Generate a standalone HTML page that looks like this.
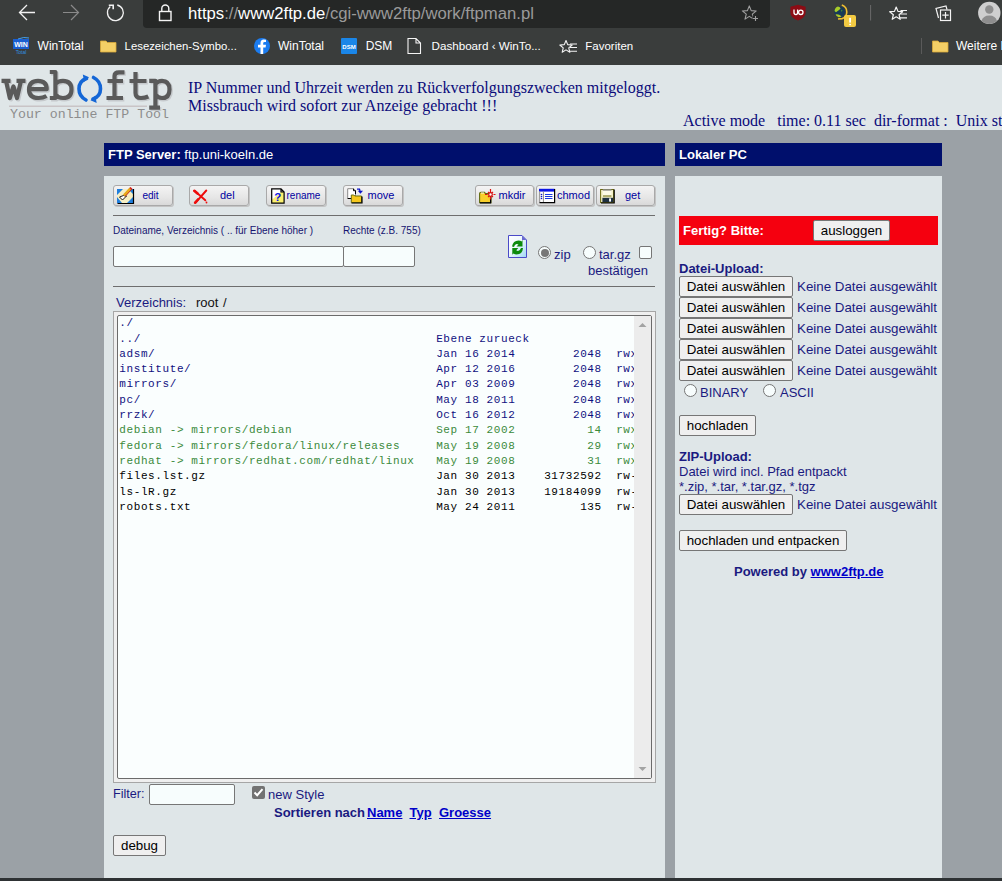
<!DOCTYPE html>
<html><head><meta charset="utf-8">
<style>
*{box-sizing:border-box}
html,body{margin:0;padding:0;width:1002px;height:881px;overflow:hidden;background:#9ba1a6;font-family:"Liberation Sans",sans-serif}
.a{position:absolute}
#chrome{position:absolute;left:0;top:0;width:1002px;height:65px;background:#3a3d3c}
#addr{position:absolute;left:143px;top:-6px;width:627px;height:34px;background:#252726;border-radius:0 0 4px 4px}
.ct{position:absolute;color:#fff;font-size:12px;white-space:nowrap;line-height:14px}
#hdr{position:absolute;left:0;top:65px;width:1002px;height:65px;background:#dfe6e8}
.serif{font-family:"Liberation Serif",serif;color:#0a0a7a;font-size:16px;white-space:nowrap;position:absolute;line-height:18px}
.bar{position:absolute;background:#000f6c;color:#fff;font-size:13px;line-height:15px;white-space:nowrap}
.panel{position:absolute;background:#dfe6e8}
.btn{position:absolute;height:21px;border:1px solid #a9a9a9;border-radius:3px;background:linear-gradient(#f4f4f4,#e6e6e6 60%,#d9d9d9);box-shadow:1px 1px 0 #c4c4c4;font-size:11px;color:#0000a0;line-height:19px}
.btn svg{position:absolute;left:3px;top:2px}
.btn span{position:absolute;top:0}
.sep{position:absolute;height:1px;background:#6e6e6e}
.lbl{position:absolute;font-size:10px;color:#151570;white-space:nowrap;line-height:12px}
.inp{position:absolute;background:#f7fdfd;border:1px solid #767676;border-radius:2px}
.nb{position:absolute;height:20px;background:#efefef;border:1px solid #767676;border-radius:2px;font-size:13.33px;color:#000;text-align:center;line-height:19.5px;white-space:nowrap}
.rt{position:absolute;color:#1a1a80;font-size:13.33px;white-space:nowrap;line-height:15px}
#list{position:absolute;left:117px;top:315px;width:535px;height:464px;background:#fafefe;border:1px solid #6b6b6b;border-radius:2px;overflow:hidden}
#list pre{margin:0;position:absolute;left:1.3px;top:0.3px;font-family:"Liberation Mono",monospace;font-size:11px;letter-spacing:0.6px;line-height:15.3px;color:#101080}
.g{color:#3b8a3b}.k{color:#000}
.radio{position:absolute;width:13px;height:13px;border:1px solid #767676;border-radius:50%;background:#f7fdfd}
.radio .dot{position:absolute;left:1.5px;top:1.5px;width:8px;height:8px;border-radius:50%;background:#777}
</style></head><body>

<div id="chrome">
  <div id="addr"></div>
  
  <svg class="a" style="left:0;top:0" width="1002" height="65" viewBox="0 0 1002 65">
    <g fill="none" stroke="#f2f2f2" stroke-width="1.3">
      <path d="M35 12.5 H20 M27 5 L19.5 12.5 L27 20"/>
    </g>
    <g fill="none" stroke="#8a8a8a" stroke-width="1.2">
      <path d="M63 12.5 H78 M71 5 L78.5 12.5 L71 20"/>
    </g>
    <g fill="none" stroke="#f2f2f2" stroke-width="1.3">
      <path d="M117.3 5 A7.9 7.9 0 1 1 110.3 6.6"/>
      <path d="M108.8 5.2 H113.2 V9.3" stroke-width="1.6"/>
    </g>
    <g fill="none" stroke="#f4f4f4" stroke-width="1.4">
      <rect x="159.5" y="11.5" width="11.5" height="9"/>
      <path d="M161.8 11.5 V8.5 A3.5 3.5 0 0 1 168.8 8.5 V11.5"/>
    </g>
    <g fill="none" stroke="#a0a0a0" stroke-width="1.1" stroke-linejoin="round">
      <path d="M749.30 5.90 L751.18 10.61 L756.24 10.94 L752.34 14.19 L753.59 19.11 L749.30 16.40 L745.01 19.11 L746.26 14.19 L742.36 10.94 L747.42 10.61 Z"/>
    </g>
    <rect x="752.5" y="15.5" width="6" height="6" fill="#252726"/>
    <path d="M755.5 16 V21 M753 18.5 H758" stroke="#a0a0a0" stroke-width="1.1"/>
    <path d="M798 4.8 L805.6 6.8 V12.5 Q805.6 17.8 798 20.5 Q790.4 17.8 790.4 12.5 V6.8 Z" fill="#8c0c14"/>
    <path d="M794 9.5 V12.6 Q794 14.6 796 14.6 Q797.6 14.6 797.6 12.6 V9.5" stroke="#fff" stroke-width="1.3" fill="none"/>
    <circle cx="800.8" cy="12.3" r="2.2" stroke="#fff" stroke-width="1.3" fill="none"/>
    <circle cx="839.6" cy="11.9" r="5.4" fill="#173a58"/>
    <path d="M834.5 11 Q835 7.5 838 6.6 Q840.5 7 840.5 8.8 Q838.5 10.5 836 12.2 Z" fill="#a8cc28"/>
    <path d="M835.5 14.5 Q838.5 13.8 841.5 16.2 Q840.5 17.3 838.5 17.2 Q836.3 16.3 835.5 14.5 Z" fill="#b0c828"/>
    <path d="M841 9.5 L842.5 10.5 L841.5 12 Z" fill="#4a9a30"/>
    <path d="M841.8 5 Q846.8 6.8 846.8 12 Q846.8 16.8 842.3 18.6 L838 19" stroke="#f0c030" stroke-width="1.6" fill="none"/>
    <rect x="844" y="15" width="12" height="12" rx="2" fill="#f2ca42"/>
    <rect x="849.2" y="17.8" width="1.8" height="4.8" fill="#fff"/><rect x="849.2" y="23.8" width="1.8" height="1.4" fill="#fff"/>
    <path d="M870.6 5 V20.5" stroke="#6a6a6a" stroke-width="1"/>
    <g fill="none" stroke="#f4f4f4" stroke-width="1.2">
      <path d="M896.20 7.00 L897.96 11.37 L902.67 11.70 L899.05 14.73 L900.20 19.30 L896.20 16.80 L892.20 19.30 L893.35 14.73 L889.73 11.70 L894.44 11.37 Z" stroke-linejoin="round" fill="#3a3d3c"/>
      <path d="M900.5 10.5 H907 M900.5 14 H907 M899.5 17.8 H907"/>
    </g>
    <g fill="none" stroke="#f4f4f4" stroke-width="1.2">
      <path d="M938.5 18 L936 8.5 L946 6 L947 9.5"/>
      <rect x="940.5" y="10" width="10" height="10.5" fill="#3a3d3c"/>
      <path d="M945.5 12 V18.5 M942.3 15.2 H948.7"/>
    </g>
    <circle cx="989.3" cy="12.9" r="11.2" fill="#cfcfcf"/>
    <circle cx="989.3" cy="9.5" r="4.2" fill="#8e8e8e"/>
    <path d="M981.5 21 Q983 15.5 989.3 15.5 Q995.6 15.5 997 21 Q993.5 24 989.3 24 Q985 24 981.5 21 Z" fill="#8e8e8e"/>
    <!-- bookmarks -->
    <rect x="13" y="39" width="16" height="10" fill="#1a5ed0"/>
    <path d="M18 39 Q24 36.5 29 38" stroke="#40a0f0" stroke-width="1" fill="none"/>
    <text x="21" y="47" font-family="Liberation Sans" font-weight="bold" font-size="7" fill="#fff" text-anchor="middle">WIN</text>
    <text x="21" y="54" font-family="Liberation Sans" font-size="5" fill="#3090e0" text-anchor="middle">Total</text>
    <path d="M100.5 41 H106 L107.5 42.5 H116 V52 H100.5 Z" fill="#f4cf66" stroke="#d9a93a" stroke-width="0.8"/>
    <circle cx="262" cy="46" r="8" fill="#1b7cf0"/>
    <path d="M263.2 54 V47.5 H265.6 L266 44.8 H263.2 V43.2 Q263.2 42 264.5 42 H266 V39.7 Q265 39.5 263.8 39.5 Q260.5 39.5 260.5 43 V44.8 H258 V47.5 H260.5 V54 Z" fill="#fff"/>
    <rect x="341" y="38" width="16" height="16" rx="1" fill="#1a86e8"/>
    <text x="349" y="48.5" font-family="Liberation Sans" font-weight="bold" font-size="6" fill="#fff" text-anchor="middle">DSM</text>
    <path d="M408 38.5 H416 L420.5 43 V53.5 H408 Z M416 38.5 V43 H420.5" fill="none" stroke="#f4f4f4" stroke-width="1.1"/>
    <g fill="none" stroke="#f4f4f4" stroke-width="1.1">
      <path d="M566.00 40.50 L567.70 44.65 L572.18 44.99 L568.76 47.90 L569.82 52.26 L566.00 49.90 L562.18 52.26 L563.24 47.90 L559.82 44.99 L564.30 44.65 Z" stroke-linejoin="round" fill="#3a3d3c"/>
      <path d="M570 44 H577 M570 47.5 H577 M569 51.3 H577"/>
    </g>
    <path d="M921.5 38 V54" stroke="#5a5a5a" stroke-width="1"/>
    <path d="M932.5 41 H938 L939.5 42.5 H948 V52 H932.5 Z" fill="#f4cf66" stroke="#d9a93a" stroke-width="0.8"/>
  </svg>
  <div class="ct" style="left:188px;top:4px;font-size:16.7px;line-height:19px;color:#fff">https<span style="color:#9a9a9a">://</span>www2ftp.de<span style="color:#9a9a9a">/cgi-www2ftp/work/ftpman.pl</span></div>
  <div class="ct" style="left:37.6px;top:39px">WinTotal</div>
  <div class="ct" style="left:124.6px;top:39px;font-size:11.35px">Lesezeichen-Symbo...</div>
  <div class="ct" style="left:278px;top:39px">WinTotal</div>
  <div class="ct" style="left:365.7px;top:39px">DSM</div>
  <div class="ct" style="left:431.5px;top:39px;font-size:11.65px">Dashboard ‹ WinTo...</div>
  <div class="ct" style="left:585.3px;top:39px;font-size:11.5px">Favoriten</div>
  <div class="ct" style="left:956px;top:39px">Weitere F</div>
</div>

<div id="hdr">
  
  <svg class="a" style="left:0;top:0" width="180" height="65" viewBox="0 65 180 65">
    <defs>
      <g id="lg" fill="none" stroke-width="4.2" stroke-linecap="butt" stroke-linejoin="round">
        <path d="M1.5 80.8 H10.5 M16.5 80.8 H25.5 M6 80.8 L9.8 98 L13.4 86.5 L17 98 L21 80.8"/>
        <path d="M29 89.2 H46.7 Q46.7 80.8 38 80.8 Q29 80.8 29 89.5 Q29 98 38.5 98 Q43 98 46.5 96"/>
        <path d="M49.8 72 H55.4 V98 H49.8 M55.4 84 Q58 80.8 63 80.8 Q71.5 80.8 71.5 89.4 Q71.5 98 63 98 Q58 98 55.4 94.5"/>
        <path d="M106.5 98 H123 M114.5 98 V76 Q114.5 72.3 119 72.3 H124.5 M107.5 81 H123"/>
        <path d="M135.5 72 V93 Q135.5 98 141 98 Q145 98 148.3 96.5 M129.5 81 H146.5"/>
        <path d="M149.2 80.8 H155.4 V107.6 M149.2 107.6 H160 M155.4 84 Q158 80.8 162 80.8 Q169.5 80.8 169.5 89.4 Q169.5 98 162 98 Q158 98 155.4 94.5"/>
      </g>
    </defs>
    <g transform="translate(1.3,1.4)" stroke="#c3c6c9" opacity="0.9"><use href="#lg"/></g>
    <g stroke="#5a5a5a"><use href="#lg"/></g>
    <path d="M9 106.3 H147" stroke="#c9c4c6" stroke-width="1.6"/>
    <path d="M86.5 78.5 Q79 81 79 88.8 Q79 96.5 86 100" stroke="#1466d6" stroke-width="3.6" fill="none" stroke-linecap="round"/>
    <path d="M82.8 74.6 L89 77.2 L84.2 82 Z" fill="#1466d6"/>
    <path d="M93 99 Q100.5 96.5 100.5 88.8 Q100.5 81 93.5 77.5" stroke="#1466d6" stroke-width="3.6" fill="none" stroke-linecap="round"/>
    <path d="M96.7 102.9 L90.5 100.3 L95.3 95.5 Z" fill="#1466d6"/>
    <text x="10" y="118.3" font-family="Liberation Mono" font-size="13.25" fill="#8d8d8d">Your online FTP Tool</text>
  </svg>
  <div class="serif" style="left:188px;top:14px">IP Nummer und Uhrzeit werden zu Rückverfolgungszwecken mitgeloggt.</div>
  <div class="serif" style="left:188px;top:32px">Missbrauch wird sofort zur Anzeige gebracht !!!</div>
  <div class="serif" style="left:683px;top:47px">Active mode &nbsp; time: 0.11 sec &nbsp;dir-format : &nbsp;Unix style</div>
</div>

<div class="bar" style="left:104px;top:143px;width:561px;height:23px;padding:4px 0 0 4px"><b>FTP Server:</b> ftp.uni-koeln.de</div>
<div class="bar" style="left:675px;top:143px;width:267px;height:23px;padding:4px 0 0 4px"><b>Lokaler PC</b></div>

<div class="panel" style="left:104px;top:176px;width:561px;height:702px"></div>
<div class="panel" style="left:675px;top:176px;width:267px;height:702px"></div>


<!-- left panel content -->
<div class="btn" style="left:113px;top:185px;width:60px"><svg width="18" height="18" viewBox="0 0 18 18" style="left:3px;top:1px"><rect x="0" y="2" width="16" height="14" fill="#f6efc4"/><path d="M0 2 H6 L0 8 Z M0 10 L5 16 H0 Z M10 16 L16 10 V16 Z M11 2 H16 V7 Z" fill="#1f7edc"/><path d="M0.5 16.5 H16.5 V2" stroke="#000" stroke-width="1.2" fill="none"/><path d="M2.5 10 L5.5 13 L9.5 9 L6.5 8.5 Z" fill="#fff" stroke="#000" stroke-width="0.9"/><path d="M7 8.5 L13.5 1.5" stroke="#e8a818" stroke-width="2.6"/><path d="M8.2 9.4 L14.4 2.6" stroke="#c01818" stroke-width="0.9"/><path d="M13 0.5 L15 2.5" stroke="#d01818" stroke-width="1.6"/></svg><span style="left:28.5px;font-size:10px">edit</span></div>
<div class="btn" style="left:189px;top:185px;width:60px"><svg width="18" height="18" viewBox="0 0 18 18"><path d="M1.8 3 L12.3 12.3 M13.3 2.5 L2.8 14.3" stroke="#ee0c0c" stroke-width="1.9" stroke-linecap="round" fill="none"/><path d="M1.3 2.8 L4.5 5.5 M2.2 14.7 L5 11.5" stroke="#ee0c0c" stroke-width="2.6" stroke-linecap="round"/><circle cx="13.5" cy="14.5" r="0.9" fill="#ee0c0c"/></svg><span style="left:30px">del</span></div>
<div class="btn" style="left:266px;top:185px;width:60px"><svg width="18" height="18" viewBox="0 0 18 18"><path d="M1.7 0.9 H11 L14.1 4 V15.1 H1.7 Z" fill="#fff"/><path d="M1.7 12 L11 4 H14.1 V15.1 H1.7 Z" fill="#fbf070"/><path d="M1.7 0.9 H11 L14.1 4 V15.1 H1.7 Z M11 0.9 V4 H14.1" fill="none" stroke="#000" stroke-width="1.2"/><text x="7.8" y="12.6" font-family="Liberation Sans" font-weight="bold" font-size="11.5" fill="#0a14e6" text-anchor="middle">?</text></svg><span style="left:19.5px;font-size:10px">rename</span></div>
<div class="btn" style="left:343px;top:185px;width:60px"><svg width="18" height="18" viewBox="0 0 18 18"><path d="M0.7 0.7 H6.5 L8.5 2.7 V10.5 H0.7 Z" fill="#fff" stroke="#8a8a8a" stroke-width="1"/><path d="M0.7 10.5 H4.5 M6.5 0.7 V2.7 H8.5 V6" stroke="#000" stroke-width="1" fill="none"/><path d="M4.3 7 H6.8 L7.8 8 H14.5 V14.6 H4.3 Z" fill="#f6c81e" stroke="#6a7010" stroke-width="1"/><path d="M4.5 15 H15 V8.5" stroke="#000" stroke-width="1.2" fill="none"/><path d="M10 1.2 H12.5 L13 3" stroke="#0a14c8" stroke-width="1.3" fill="none"/><path d="M10.8 2.8 H16 L13.4 5.8 Z" fill="#0a14c8"/></svg><span style="left:23.5px">move</span></div>
<div class="btn" style="left:475px;top:185px;width:59px"><svg width="18" height="18" viewBox="0 0 18 18"><path d="M0.6 5.5 Q0.6 4.2 2 4.2 H5.5 L6.5 5.6 H12 V14.6 H0.6 Z" fill="#f8cf2a" stroke="#5e6a10" stroke-width="1.1"/><path d="M1 14.8 H11.6 V9" stroke="#000" stroke-width="1.2" fill="none"/><path d="M2 5 H5" stroke="#fff" stroke-width="0.9"/><path d="M11.5 1 V5 M11.5 8 V11.5 M8.5 6.5 H6 M14.5 6.5 H16.5 M9 3.8 L10.2 5.1 M14 3.8 L12.8 5.1 M9 9.2 L10.2 7.9 M14 9.2 L12.8 7.9" stroke="#e01010" stroke-width="1.2"/><circle cx="11.5" cy="6.5" r="1.8" fill="#fff" stroke="#d01010" stroke-width="1.2"/></svg><span style="left:22.5px">mkdir</span></div>
<div class="btn" style="left:536px;top:185px;width:58px"><svg width="18" height="18" viewBox="0 0 18 18" style="left:2px"><rect x="0.5" y="1" width="15" height="13.6" fill="#fff"/><rect x="0" y="0.8" width="15.7" height="2.8" fill="#0a14e6"/><path d="M0.7 3.5 V14.4 M4.4 3.5 V14.4" stroke="#8a8a8a" stroke-width="1"/><path d="M0.5 14.6 H15.6 V1" stroke="#000" stroke-width="1.2" fill="none"/><circle cx="2.5" cy="6.5" r="0.8" fill="#0a14c8"/><circle cx="2.5" cy="8.5" r="0.8" fill="#0a14c8"/><circle cx="2.5" cy="10.5" r="0.8" fill="#0a14c8"/><path d="M6 6.5 H13.5 M6 8.5 H13.5 M6 10.5 H13.5" stroke="#1a3ae0" stroke-width="1"/></svg><span style="left:20px">chmod</span></div>
<div class="btn" style="left:596px;top:185px;width:59px"><svg width="18" height="18" viewBox="0 0 18 18"><rect x="0.6" y="1.5" width="13" height="13" fill="#f4f0c8" stroke="#6a6a10" stroke-width="1"/><rect x="2.8" y="1.2" width="8.6" height="1.6" fill="#8a8a8a"/><rect x="2.8" y="2.8" width="8.6" height="4.8" fill="#fdfbe8"/><path d="M3 8 H11.4" stroke="#6a6a10" stroke-width="1"/><rect x="2.4" y="9.8" width="10.8" height="4.4" fill="#1e3040"/><rect x="9.1" y="10.4" width="1.9" height="3.2" fill="#fff"/><path d="M1 15 H14.2 V1.5" stroke="#000" stroke-width="1.2" fill="none"/></svg><span style="left:28px">get</span></div>
<div class="sep" style="left:113px;top:215px;width:542px"></div>
<div class="lbl" style="left:113px;top:224.5px">Dateiname, Verzeichnis ( .. für Ebene höher )</div>
<div class="lbl" style="left:343px;top:224.5px">Rechte (z.B. 755)</div>
<div class="inp" style="left:113px;top:246px;width:231px;height:21px"></div>
<div class="inp" style="left:343px;top:246px;width:72px;height:21px"></div>
<svg class="a" style="left:508px;top:235px" width="19" height="23" viewBox="0 0 19 23"><defs><linearGradient id="pg" x1="0" y1="0" x2="1" y2="1"><stop offset="0" stop-color="#ffffff"/><stop offset="0.45" stop-color="#eef8fc"/><stop offset="1" stop-color="#9ed8f4"/></linearGradient></defs><path d="M0.5 0.5 H14 L18.5 5 V22.5 H0.5 Z" fill="url(#pg)" stroke="#4a4ac8" stroke-width="1"/><path d="M14 0.5 L18.5 5 H14 Z" fill="#6a6ad0"/><path d="M4 11.5 Q5 5.5 10.5 5.5 Q12.5 5.5 13.5 6.5 L14.5 5 V11.5 H8.5 L10.5 9.5 Q9.5 8.8 8.5 9 Q6.5 9.3 6 12 Z" fill="#0c8a0c"/><path d="M15 13 Q14.5 19.5 8.5 19.5 Q6.8 19.5 5.5 18.5 L4.3 19.8 V13 H10.3 L8.3 15.3 Q9 16 10 16 Q12 16 13 13 Z" fill="#0c8a0c"/></svg>
<div class="radio" style="left:538px;top:246px"><div class="dot"></div></div>
<div class="rt" style="left:554px;top:247px;font-size:13px">zip</div>
<div class="radio" style="left:583px;top:246px"></div>
<div class="rt" style="left:599px;top:247px;font-size:13px">tar.gz</div>
<div class="inp" style="left:639px;top:246px;width:13px;height:13px;border-radius:2px"></div>
<div class="rt" style="left:588px;top:263px;font-size:13px">bestätigen</div>
<div class="sep" style="left:113px;top:286px;width:542px"></div>
<div class="rt" style="left:116px;top:295px;font-size:13px">Verzeichnis:<span style="color:#111;position:absolute;left:80px">root</span><span style="color:#111;position:absolute;left:107px">/</span></div>
<div class="a" style="left:113px;top:311px;width:543px;height:472px;border:1px solid #a6a6a6;background:#efefef"></div>
<div id="list"><pre>./
../                                         Ebene zurueck
adsm/                                       Jan 16 2014        2048  rwxr-xr-x
institute/                                  Apr 12 2016        2048  rwxr-xr-x
mirrors/                                    Apr 03 2009        2048  rwxr-xr-x
pc/                                         May 18 2011        2048  rwxr-xr-x
rrzk/                                       Oct 16 2012        2048  rwxr-xr-x
<span class="g">debian -> mirrors/debian                    Sep 17 2002          14  rwxrwxrwx
fedora -> mirrors/fedora/linux/releases     May 19 2008          29  rwxrwxrwx
redhat -> mirrors/redhat.com/redhat/linux   May 19 2008          31  rwxrwxrwx</span>
<span class="k">files.lst.gz                                Jan 30 2013    31732592  rw-r--r--
ls-lR.gz                                    Jan 30 2013    19184099  rw-r--r--
robots.txt                                  May 24 2011         135  rw-r--r--</span></pre></div>


<div id="sb" class="a" style="left:634px;top:316px;width:17px;height:462px;background:#ececec"></div>
<svg class="a" style="left:638px;top:322px" width="9" height="6"><path d="M0.5 5 L4.5 1 L8.5 5 Z" fill="#a3a3a3"/></svg>
<svg class="a" style="left:638px;top:766px" width="9" height="6"><path d="M0.5 1 L4.5 5 L8.5 1 Z" fill="#a3a3a3"/></svg>
<div class="rt" style="left:113px;top:787px;font-size:12.6px;color:#1a1a80">Filter:</div>
<div class="inp" style="left:149px;top:784px;width:86px;height:21px"></div>
<div class="a" style="left:252px;top:786px;width:13px;height:13px;background:#727272;border-radius:2px"><svg width="13" height="13" style="position:absolute;left:0;top:0"><path d="M2.5 6.5 L5.2 9.2 L10.5 3.2" stroke="#fff" stroke-width="2" fill="none"/></svg></div>
<div class="rt" style="left:268px;top:787px;font-size:13px">new Style</div>
<div class="rt" style="left:274px;top:805px;font-size:13px;font-weight:bold">Sortieren nach</div><div class="rt" style="left:367px;top:805px;font-size:13px;font-weight:bold;color:#0000c8"><u>Name</u></div><div class="rt" style="left:409.5px;top:805px;font-size:13px;font-weight:bold;color:#0000c8"><u>Typ</u></div><div class="rt" style="left:439px;top:805px;font-size:13px;font-weight:bold;color:#0000c8"><u>Groesse</u></div>
<div class="nb" style="left:113px;top:835px;width:53px;height:21px">debug</div>

<div class="a" style="left:679px;top:216px;width:259px;height:29px;background:#f5000f"></div>
<div class="rt" style="left:683px;top:223px;font-size:13px;font-weight:bold;color:#fff">Fertig? Bitte:</div>
<div class="nb" style="left:813px;top:220px;width:77px;height:21px">ausloggen</div>
<div class="rt" style="left:679px;top:261px;font-size:13px;font-weight:bold">Datei-Upload:</div>
<div class="nb" style="left:679px;top:276px;width:114px;height:21px">Datei auswählen</div><div class="rt" style="left:797px;top:279px">Keine Datei ausgewählt</div>
<div class="nb" style="left:679px;top:297px;width:114px;height:21px">Datei auswählen</div><div class="rt" style="left:797px;top:300px">Keine Datei ausgewählt</div>
<div class="nb" style="left:679px;top:318px;width:114px;height:21px">Datei auswählen</div><div class="rt" style="left:797px;top:321px">Keine Datei ausgewählt</div>
<div class="nb" style="left:679px;top:339px;width:114px;height:21px">Datei auswählen</div><div class="rt" style="left:797px;top:342px">Keine Datei ausgewählt</div>
<div class="nb" style="left:679px;top:360px;width:114px;height:21px">Datei auswählen</div><div class="rt" style="left:797px;top:363px">Keine Datei ausgewählt</div>
<div class="radio" style="left:684px;top:384px"></div><div class="rt" style="left:700px;top:385px;font-size:13px">BINARY</div>
<div class="radio" style="left:763px;top:384px"></div><div class="rt" style="left:780px;top:385px;font-size:13px">ASCII</div>
<div class="nb" style="left:679px;top:415px;width:77px;height:21px">hochladen</div>
<div class="rt" style="left:679px;top:449px;font-size:13px;font-weight:bold">ZIP-Upload:</div>
<div class="rt" style="left:679px;top:464px;font-size:13px">Datei wird incl. Pfad entpackt</div>
<div class="rt" style="left:679px;top:479px;font-size:13px">*.zip, *.tar, *.tar.gz, *.tgz</div>
<div class="nb" style="left:679px;top:494px;width:114px;height:21px">Datei auswählen</div><div class="rt" style="left:797px;top:497px">Keine Datei ausgewählt</div>
<div class="nb" style="left:679px;top:530px;width:168px;height:21px">hochladen und entpacken</div>
<div class="rt" style="left:734px;top:564px;font-size:13px;font-weight:bold">Powered by <u style="color:#0000c8">www2ftp.de</u></div>
<div class="a" style="left:0;top:878px;width:1002px;height:3px;background:#2e3234"></div>
</body></html>
